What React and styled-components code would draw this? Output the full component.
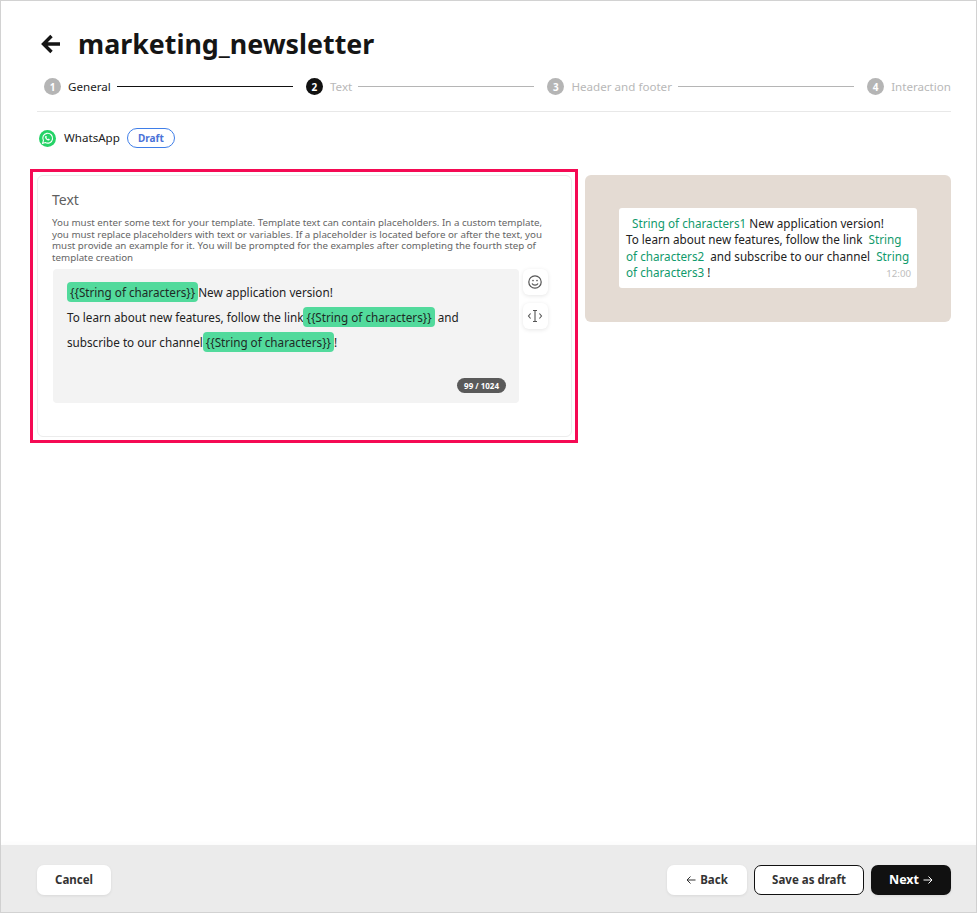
import React from 'react'
import styled, { createGlobalStyle } from 'styled-components'

const GlobalStyle = createGlobalStyle`
  html, body { margin: 0; padding: 0; background: #fff; }
  body { font-family: "Noto Sans", "Open Sans", sans-serif; color: #111; }
  * { box-sizing: border-box; }
`

const Page = styled.div`
  width: 977px;
  height: 913px;
  border: 1px solid #d2d2d2;
  display: flex;
  flex-direction: column;
  background: #fff;
`

const Main = styled.div`
  flex: 1;
  padding: 0 25px 0 36px;
`

const TitleRow = styled.div`
  display: flex;
  align-items: center;
  height: 38px;
  margin-top: 24px;
  gap: 17px;
  padding-left: 3px;
`

const BackArrow = styled.svg`
  width: 21px;
  height: 22px;
  display: block;
`

const Title = styled.h1`
  margin: 0;
  font-size: 26.8px;
  line-height: 38px;
  font-weight: 700;
  color: #151515;
`

const Stepper = styled.div`
  display: flex;
  align-items: center;
  height: 50px;
  padding-left: 7px;
  margin-top: -1px;
  border-bottom: 1px solid #e8e8e8;
`

const Step = styled.div`
  display: flex;
  align-items: center;
  flex: ${p => (p.$last ? '0 0 auto' : '1 1 auto')};
  margin-right: ${p => (p.$last ? '0' : '13px')};
`

const StepNum = styled.span`
  width: 17px;
  height: 17px;
  border-radius: 50%;
  background: ${p => (p.$current ? '#111' : '#b5b5b5')};
  color: #fff;
  font-size: 10px;
  font-weight: 700;
  display: flex;
  align-items: center;
  justify-content: center;
  flex: none;
`

const StepLabel = styled.span`
  margin-left: 7px;
  font-size: 11.6px;
  line-height: 16px;
  color: ${p => (p.$done ? '#1a1a1a' : '#b8b8b8')};
  white-space: nowrap;
`

const StepLine = styled.span`
  flex: 1;
  height: 1px;
  margin-left: 6px;
  background: ${p => (p.$done ? '#111' : '#b5b5b5')};
`

const ChannelRow = styled.div`
  display: flex;
  align-items: center;
  height: 20px;
  margin-top: 16px;
  padding-left: 2px;
`

const ChannelLogo = styled.svg`
  width: 17px;
  height: 17px;
  display: block;
`

const ChannelName = styled.span`
  margin: 0 0 2px 8px;
  font-size: 11.6px;
  color: #222;
`

const DraftBadge = styled.span`
  margin-left: 7px;
  width: 48px;
  height: 20px;
  border: 1px solid #3f7ee8;
  border-radius: 10px;
  display: flex;
  align-items: center;
  justify-content: center;
  font-size: 10px;
  font-weight: 700;
  color: #4a72d8;
`

const Columns = styled.div`
  display: flex;
  align-items: flex-start;
  margin: 21px 0 0 -7px;
  gap: 7px;
`

const Frame = styled.div`
  width: 548px;
  height: 274px;
  border: 3px solid #f50a54;
  padding: 3px;
  flex: none;
`

const Card = styled.div`
  height: 100%;
  margin-left: 1px;
  border: 1px solid #ececec;
  border-radius: 6px;
  padding: 14px 15px 0 15px;
`

const CardTitle = styled.div`
  margin-left: -1px;
  font-size: 14px;
  line-height: 20px;
  color: #5f5f5f;
`

const Hint = styled.p`
  margin: 7px 0 0 -1px;
  width: 506px;
  font-size: 9.75px;
  line-height: 11.7px;
  color: #666;
`

const EditorRow = styled.div`
  display: flex;
  align-items: flex-start;
  margin-top: 5px;
  gap: 4px;
`

const Editor = styled.div`
  position: relative;
  width: 466px;
  height: 134px;
  background: #f3f3f3;
  border-radius: 4px;
  padding: 11px 14px;
  font-size: 11.7px;
  line-height: 25px;
  color: #222;
`

const Chip = styled.span`
  display: inline-block;
  height: 20px;
  line-height: 20px;
  padding: 0 3px;
  border-radius: 4px;
  background: #52da9c;
  color: #1e2b26;
`

const Counter = styled.span`
  position: absolute;
  right: 13px;
  bottom: 10px;
  height: 15px;
  line-height: 15px;
  padding: 0 7px;
  border-radius: 8px;
  background: #5a5a5a;
  color: #fff;
  font-size: 8px;
  font-weight: 700;
`

const Tools = styled.div`
  display: flex;
  flex-direction: column;
  gap: 8px;
`

const ToolButton = styled.div`
  width: 25px;
  height: 26px;
  border-radius: 6px;
  background: #fff;
  box-shadow: 0 1px 4px rgba(0, 0, 0, .1);
  display: flex;
  align-items: center;
  justify-content: center;
`

const ToolIcon = styled.svg`
  width: 16px;
  height: 16px;
  display: block;
  margin-left: -1px;
`

const Preview = styled.div`
  width: 366px;
  height: 147px;
  margin-top: 6px;
  border-radius: 6px;
  background: #e4dbd3;
  padding: 33px 34px;
  flex: none;
`

const Bubble = styled.div`
  position: relative;
  width: 298px;
  height: 80px;
  background: #fff;
  border-radius: 3px;
  padding: 7px 7px 0;
  font-size: 11.7px;
  line-height: 16.4px;
  color: #222;
`

const Var = styled.span`
  color: #119a6c;
`

const Time = styled.span`
  position: absolute;
  right: 6px;
  bottom: 7px;
  font-size: 9.7px;
  line-height: 14px;
  color: #bdbdbd;
`

const Footer = styled.div`
  height: 67px;
  flex: none;
  display: flex;
  align-items: center;
  background: #ebebeb;
  padding: 3px 25px 0 36px;
  box-shadow: 0 -2px 4px rgba(0, 0, 0, .02);
`

const Spacer = styled.div`
  flex: 1;
`

const Button = styled.button`
  height: 30px;
  width: ${p => p.$w}px;
  margin-left: ${p => p.$gap || 0}px;
  border-radius: 7px;
  border: ${p => (p.$outline ? '1px solid #111' : 'none')};
  background: ${p => (p.$dark ? '#111' : '#fff')};
  color: ${p => (p.$dark ? '#fff' : '#333')};
  box-shadow: ${p => (p.$outline ? 'none' : '0 1px 3px rgba(0, 0, 0, .08)')};
  font-family: inherit;
  font-size: ${p => (p.$dark ? '12.5px' : '11.5px')};
  font-weight: 700;
  display: flex;
  align-items: center;
  justify-content: center;
  gap: 4px;
  padding: 0 0 2px;
`

const SmallArrow = styled.svg`
  width: 10px;
  height: 10px;
  display: block;
  margin-top: 2px;
`

const steps = [
  { n: 1, label: 'General', done: true },
  { n: 2, label: 'Text', current: true },
  { n: 3, label: 'Header and footer' },
  { n: 4, label: 'Interaction', last: true },
]

const App = () => {
  return (
    <Page>
      <GlobalStyle />
      <Main>
        <TitleRow>
          <BackArrow viewBox="0 0 21 22" fill="none" stroke="#151515" strokeWidth="3.4">
            <path d="M20 11H3.5M11.5 3L3.5 11l8 8" />
          </BackArrow>
          <Title>marketing_newsletter</Title>
        </TitleRow>
        <Stepper>
          {steps.map(s => (
            <Step key={s.n} $last={s.last}>
              <StepNum $current={s.current}>{s.n}</StepNum>
              <StepLabel $done={s.done}>{s.label}</StepLabel>
              {!s.last && <StepLine $done={s.done} />}
            </Step>
          ))}
        </Stepper>
        <ChannelRow>
          <ChannelLogo viewBox="0 0 17 17">
            <circle cx="8.5" cy="8.5" r="8.5" fill="#25d366" />
            <path d="M3.6 13.4l.8-2.8a4.9 4.9 0 1 1 1.9 1.9z" fill="none" stroke="#fff" strokeWidth="1.1" />
            <path d="M6.6 5.9c-.5.4-.7 1-.4 1.8.5 1.3 1.5 2.2 2.8 2.7.8.2 1.4 0 1.7-.6l.1-.6-1.2-.6-.6.6c-.7-.3-1.2-.8-1.6-1.5l.5-.6-.5-1.2z" fill="#fff" />
          </ChannelLogo>
          <ChannelName>WhatsApp</ChannelName>
          <DraftBadge>Draft</DraftBadge>
        </ChannelRow>
        <Columns>
          <Frame>
            <Card>
              <CardTitle>Text</CardTitle>
              <Hint>
                You must enter some text for your template. Template text can contain placeholders. In a custom template, you must replace placeholders with text or variables. If a placeholder is located before or after the text, you must provide an example for it. You will be prompted for the examples after completing the fourth step of template creation
              </Hint>
              <EditorRow>
                <Editor>
                  <div><Chip>{'{{String of characters}}'}</Chip>New application version!</div>
                  <div>To learn about new features, follow the link<Chip>{'{{String of characters}}'}</Chip> and</div>
                  <div>subscribe to our channel<Chip>{'{{String of characters}}'}</Chip>!</div>
                  <Counter>99 / 1024</Counter>
                </Editor>
                <Tools>
                  <ToolButton>
                    <ToolIcon viewBox="0 0 16 16" fill="none" stroke="#555" strokeWidth="1.2">
                      <circle cx="8" cy="8" r="6.2" />
                      <circle cx="6" cy="6.6" r=".8" fill="#555" stroke="none" />
                      <circle cx="10" cy="6.6" r=".8" fill="#555" stroke="none" />
                      <path d="M5 9.4c.6 1.2 1.6 1.8 3 1.8s2.4-.6 3-1.8" />
                    </ToolIcon>
                  </ToolButton>
                  <ToolButton>
                    <ToolIcon viewBox="0 0 16 16" fill="none" stroke="#555" strokeWidth="1.1">
                      <path d="M3.6 5.5L1.5 8l2.1 2.5M12.4 5.5L14.5 8l-2.1 2.5M8 2.5v11M6 2.5h4M6 13.5h4" />
                    </ToolIcon>
                  </ToolButton>
                </Tools>
              </EditorRow>
            </Card>
          </Frame>
          <Preview>
            <Bubble>
              <div>&nbsp;&nbsp;<Var>String of characters1</Var> New application version!</div>
              <div>To learn about new features, follow the link <Var>&nbsp;String of characters2</Var> &nbsp;and subscribe to our channel <Var>&nbsp;String of characters3</Var> !</div>
              <Time>12:00</Time>
            </Bubble>
          </Preview>
        </Columns>
      </Main>
      <Footer>
        <Button $w={74}>Cancel</Button>
        <Spacer />
        <Button $w={80}>
          <SmallArrow viewBox="0 0 10 10" fill="none" stroke="#333" strokeWidth="1"><path d="M9.5 5H1M4.5 1.5L1 5l3.5 3.5" /></SmallArrow>
          Back
        </Button>
        <Button $w={110} $gap={7} $outline>Save as draft</Button>
        <Button $w={80} $gap={7} $dark>
          Next
          <SmallArrow viewBox="0 0 10 10" fill="none" stroke="#fff" strokeWidth="1"><path d="M.5 5H9M5.5 1.5L9 5 5.5 8.5" /></SmallArrow>
        </Button>
      </Footer>
    </Page>
  )
}

export default App
